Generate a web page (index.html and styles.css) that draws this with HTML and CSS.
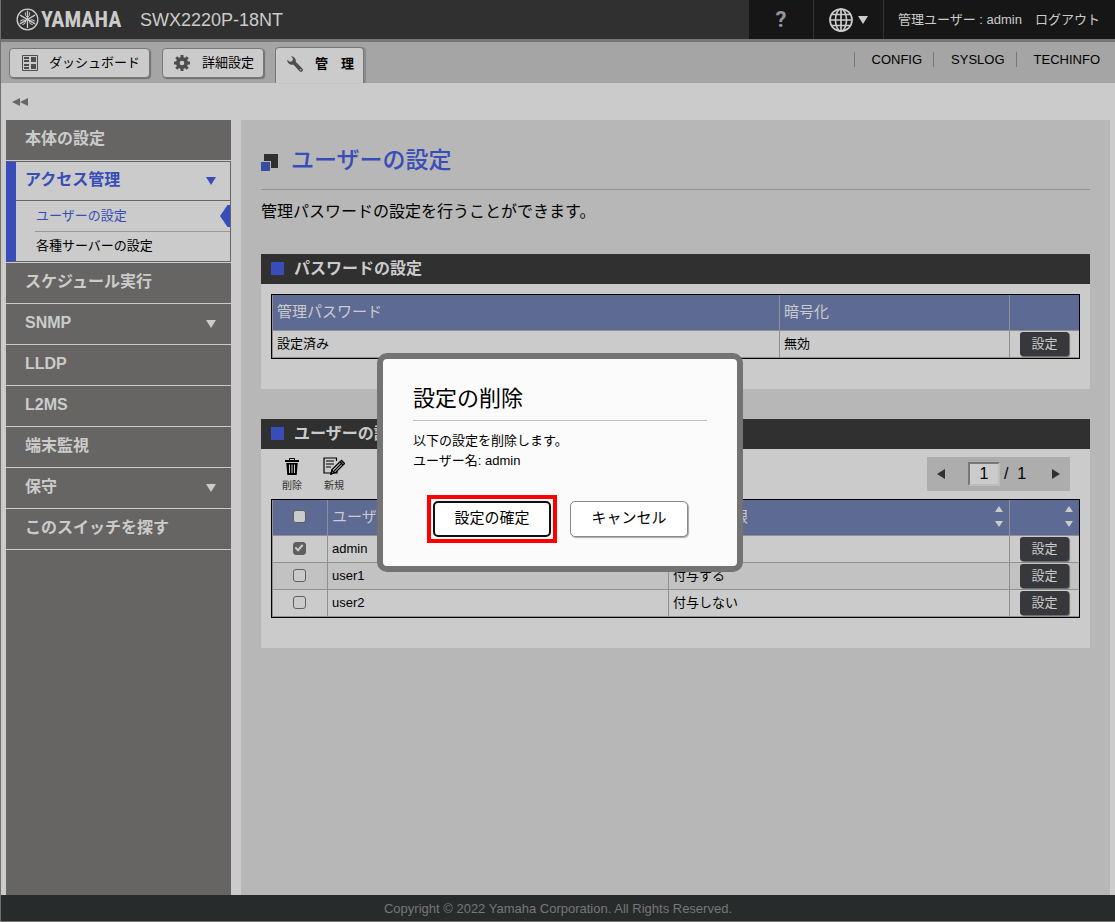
FILE: index.html
```html
<!DOCTYPE html>
<html lang="ja">
<head>
<meta charset="utf-8">
<title>SWX2220P-18NT</title>
<link rel="stylesheet" href="styles.css">
</head>
<body>
<div class="page">
  <header class="top">
    <div class="brand">
      <svg class="brand-mark" viewBox="0 0 24 24" aria-hidden="true">
        <circle cx="12" cy="12" r="10.800" fill="none" stroke="currentColor" stroke-width="1.400"/>
        <g id="fork">
          <path d="M12 2.800V21" fill="none" stroke="currentColor" stroke-width="1.400"/>
          <path d="M9.800 4.500V7.500L12 10L14.200 7.500V4.500" fill="none" stroke="currentColor" stroke-width="1"/>
        </g>
        <use href="#fork" transform="rotate(120 12 12)"/>
        <use href="#fork" transform="rotate(240 12 12)"/>
      </svg>
      <span class="brand-name">YAMAHA</span>
    </div>
    <h1 class="model">SWX2220P-18NT</h1>
    <div class="top-right">
      <button class="help" aria-label="ヘルプ">?</button>
      <button class="lang" aria-label="言語">
        <svg class="globe" viewBox="0 0 24 24" aria-hidden="true">
          <g fill="none" stroke="currentColor" stroke-width="1.700">
            <circle cx="12" cy="12" r="11"/><ellipse cx="12" cy="12" rx="5.500" ry="11"/>
            <path d="M12 1V23M1 12H23M3 6.500H21M3 17.500H21"/>
          </g>
        </svg>
        <svg class="lang-arrow" viewBox="0 0 10 8" aria-hidden="true"><path d="M0 0H10L5 8Z" fill="currentColor"/></svg>
      </button>
      <div class="user"><span>管理ユーザー : admin</span><a href="#">ログアウト</a></div>
    </div>
  </header>

  <nav class="tabs">
    <button class="tab tab-dashboard">
      <svg class="tab-icon" viewBox="0 0 16 16" aria-hidden="true"><path d="M.5.5H15.500V15.500H.5Z" fill="none" stroke="currentColor"/><path d="M2 2H7V4H2ZM2 5H7V7H2ZM2 9H7V11H2ZM2 12H7V14H2ZM9 2H14V7H9ZM9 9H14V14H9Z" fill="currentColor"/></svg>
      ダッシュボード
    </button>
    <button class="tab tab-detail">
      <svg class="tab-icon" viewBox="0 0 16 16" aria-hidden="true"><circle cx="8" cy="8" r="4.200" fill="none" stroke="currentColor" stroke-width="3.800"/><path d="M8 0V3M8 13V16M0 8H3M13 8H16M2.300 2.300L4.500 4.500M11.500 11.500L13.700 13.700M13.700 2.300L11.500 4.500M4.500 11.500L2.300 13.700" stroke="currentColor" stroke-width="3"/></svg>
      詳細設定
    </button>
    <button class="tab tab-admin">
      <svg class="tab-icon" viewBox="0 0 17 17" aria-hidden="true"><path d="M4 .3A5 5 0 0 1 9.300 6.200L16.300 13.200A2 2 0 0 1 13.300 16.200L6.700 9A5 5 0 0 1 .2 3.900L3.500 6.300L6 4.900L6.200 2.500Z" fill="currentColor"/><circle cx="14.600" cy="14.600" r=".8" fill="#cbcbcb"/></svg>
      管　理
    </button>
    <ul class="tools">
      <li><a href="#">CONFIG</a></li>
      <li><a href="#">SYSLOG</a></li>
      <li><a href="#">TECHINFO</a></li>
    </ul>
  </nav>

  <div class="fold">
    <button class="fold-button" aria-label="メニューを閉じる"><svg viewBox="0 0 16 8" aria-hidden="true"><path d="M8 0V8L0 4ZM16 0V8L8 4Z" fill="currentColor"/></svg></button>
  </div>

  <div class="columns">
    <nav class="side">
      <a class="item" href="#">本体の設定</a>
      <div class="group">
        <a class="group-head" href="#">アクセス管理<svg class="caret" viewBox="0 0 10 8" aria-hidden="true"><path d="M0 0H10L5 8Z" fill="currentColor"/></svg></a>
        <a class="sub current" href="#">ユーザーの設定</a>
        <a class="sub" href="#">各種サーバーの設定</a>
      </div>
      <a class="item" href="#">スケジュール実行</a>
      <a class="item" href="#">SNMP<svg class="caret" viewBox="0 0 10 8" aria-hidden="true"><path d="M0 0H10L5 8Z" fill="currentColor"/></svg></a>
      <a class="item" href="#">LLDP</a>
      <a class="item" href="#">L2MS</a>
      <a class="item" href="#">端末監視</a>
      <a class="item" href="#">保守<svg class="caret" viewBox="0 0 10 8" aria-hidden="true"><path d="M0 0H10L5 8Z" fill="currentColor"/></svg></a>
      <a class="item" href="#">このスイッチを探す</a>
    </nav>

    <main class="main">
      <h2 class="title">
        <svg class="title-mark" viewBox="0 0 17 17" aria-hidden="true"><path d="M3 0H17V14H3Z" fill="#303030"/><path d="M0 7H10V17H0Z" fill="#b7b7b7"/><path d="M0 8H9V17H0Z" fill="#394d9f"/></svg>
        ユーザーの設定
      </h2>
      <p class="lead">管理パスワードの設定を行うことができます。</p>

      <section class="card">
        <h3 class="card-title">パスワードの設定</h3>
        <div class="card-body card-body-first">
          <div class="frame">
            <table class="grid">
              <colgroup><col><col class="col-crypt"><col class="col-action"></colgroup>
              <thead><tr><th>管理パスワード</th><th>暗号化</th><th></th></tr></thead>
              <tbody><tr><td>設定済み</td><td>無効</td><td class="action"><button class="set">設定</button></td></tr></tbody>
            </table>
          </div>
        </div>
      </section>

      <section class="card">
        <h3 class="card-title">ユーザーの設定</h3>
        <div class="card-body">
          <div class="toolbar">
            <button class="tool"><svg viewBox="0 0 14 17" class="trash" aria-hidden="true"><path d="M4.500 2V.5H9.500V2" fill="none" stroke="currentColor"/><path d="M0 2H14V4H0ZM1.300 5H12.700L11.700 17H2.300Z" fill="currentColor"/><path d="M4.500 6.500V15M7 6.500V15M9.500 6.500V15" stroke="#cbcbcb"/></svg>削除</button>
            <button class="tool"><svg viewBox="0 0 22 18" class="memo" aria-hidden="true"><path d="M13.500 4V1H1V16H8M14 13V16H12M3 4H11M3 7H11M3 10H8" fill="none" stroke="currentColor" stroke-width="1.200"/><path d="M8 17L9 12.500L18.500 3.500L21.500 6.500L12.500 15.500Z" fill="#cbcbcb" stroke="currentColor" stroke-width="1.300"/><path d="M11 14L19.500 5.500M8 17L9 13.500L11.500 15.500ZM17 5L20 8" fill="none" stroke="currentColor" stroke-width="1.200"/></svg>新規</button>
            <div class="pager">
              <button class="page-step" aria-label="前へ"><svg viewBox="0 0 8 10" aria-hidden="true"><path d="M8 0V10L0 5Z" fill="currentColor"/></svg></button>
              <input class="page-no" type="text" value="1" aria-label="ページ">
              <span class="page-all">/&nbsp; 1</span>
              <button class="page-step" aria-label="次へ"><svg viewBox="0 0 8 10" aria-hidden="true"><path d="M0 0V10L8 5Z" fill="currentColor"/></svg></button>
            </div>
          </div>
          <div class="frame">
            <table class="grid">
              <colgroup><col class="col-check"><col><col><col class="col-action"></colgroup>
              <thead><tr>
                <th class="check"><input type="checkbox" aria-label="すべて選択"></th>
                <th><div class="sortable">ユーザー名<svg class="sort" viewBox="0 0 8 22" aria-hidden="true"><path d="M4 0L8 6H0ZM0 15H8L4 21Z" fill="currentColor"/></svg></div></th>
                <th><div class="sortable">管理者権限<svg class="sort" viewBox="0 0 8 22" aria-hidden="true"><path d="M4 0L8 6H0ZM0 15H8L4 21Z" fill="currentColor"/></svg></div></th>
                <th><div class="sortable sort-only"><svg class="sort" viewBox="0 0 8 22" aria-hidden="true"><path d="M4 0L8 6H0ZM0 15H8L4 21Z" fill="currentColor"/></svg></div></th>
              </tr></thead>
              <tbody>
                <tr><td class="check"><input type="checkbox" checked aria-label="admin"></td><td>admin</td><td>付与する</td><td class="action"><button class="set">設定</button></td></tr>
                <tr><td class="check"><input type="checkbox" aria-label="user1"></td><td>user1</td><td>付与する</td><td class="action"><button class="set">設定</button></td></tr>
                <tr><td class="check"><input type="checkbox" aria-label="user2"></td><td>user2</td><td>付与しない</td><td class="action"><button class="set">設定</button></td></tr>
              </tbody>
            </table>
          </div>
        </div>
      </section>
    </main>
  </div>

  <footer class="foot">Copyright © 2022 Yamaha Corporation. All Rights Reserved.</footer>
</div>

<div class="overlay">
  <div class="dialog" role="dialog" aria-labelledby="dialog-title">
    <h2 class="dialog-title" id="dialog-title">設定の削除</h2>
    <p class="dialog-text">以下の設定を削除します。<br>ユーザー名: admin</p>
    <div class="dialog-actions">
      <div class="marked"><button class="choice primary">設定の確定</button></div>
      <button class="choice">キャンセル</button>
    </div>
  </div>
</div>
</body>
</html>
```
FILE: styles.css
```css
* { box-sizing: border-box; }

body {
  margin: 0;
  font: 13px/20px "Liberation Sans", "Noto Sans CJK JP", sans-serif;
  color: #000;
  background: #cbcbcb;
}
h1, h2, h3, p, ul { margin: 0; padding: 0; font-weight: normal; }
button, input { font: inherit; color: inherit; margin: 0; }
button { border: 0; padding: 0; background: none; }
a { color: inherit; text-decoration: none; }
svg { display: block; flex: none; }

.page {
  display: flex;
  flex-direction: column;
  min-height: 100vh;
  border-left: 1px solid #707070;
  border-bottom: 1px solid #707070;
}

/* header */
.top {
  display: flex;
  align-items: center;
  height: 42px;
  padding-left: 15px;
  background: #303030;
  color: #cbcbcb;
  border-bottom: 3px solid #777;
}
.brand { display: flex; align-items: center; gap: 2px; width: 124px; }
.brand-mark { width: 23px; height: 23px; }
.brand-name { font: bold 22px/24px "Liberation Sans Narrow", "Roboto Condensed", "Open Sans Condensed", "Liberation Sans", sans-serif; }
.model { font-size: 18px; }
.top-right { display: flex; align-self: stretch; margin-left: auto; background: #161616; }
.help { width: 65px; border-right: 1px solid #333; color: #92959a; font: bold 22px/24px Roboto, sans-serif; }
.lang { display: flex; align-items: center; gap: 5px; width: 70px; padding-left: 15px; border-right: 1px solid #333; }
.globe { width: 24px; height: 24px; }
.lang-arrow { width: 10px; height: 8px; }
.user { display: flex; align-items: center; gap: 13px; padding: 0 15px 0 14px; }

/* tab bar */
.tabs { display: flex; height: 41px; padding: 5px 0 0 8px; background: #a5a5a5; }
.tab {
  display: flex;
  align-items: center;
  height: 30px;
  margin-top: 1px;
  background: #cbcbcb;
  border: 1px solid #777;
  border-radius: 4px;
  box-shadow: 1px 1px 1px #707070;
}
.tab-icon { width: 16px; height: 16px; color: #4d4d4d; }
.tab-dashboard { gap: 11px; padding: 0 9px 0 12px; margin-right: 12px; }
.tab-detail { gap: 12px; padding: 0 9px 0 11px; margin-right: 11px; }
.tab-admin {
  gap: 12px;
  height: 36px;
  margin-top: 0;
  padding: 0 9px 4px 11px;
  font-weight: bold;
  border-bottom: 0;
  border-radius: 4px 4px 0 0;
  box-shadow: 2px 0 1px #8a8a8a;
}
.tools { display: flex; margin-left: auto; padding: 5px 15px 0 0; list-style: none; line-height: 15px; height: 20px; }
.tools li { padding-left: 17px; border-left: 1px solid #777; }
.tools li + li { margin-left: 11px; }

.fold { height: 37px; padding: 15px 11px; }
.fold-button { display: block; color: #666; }
.fold-button svg { width: 16px; height: 8px; }

/* columns */
.columns { display: flex; flex: 1; gap: 10px; padding: 0 5px; }
.side { width: 225px; flex: none; background: #666563; color: #cbcbcb; }
.item, .group-head {
  display: flex;
  align-items: center;
  justify-content: space-between;
  padding: 0 15px 2px 19px;
  font-size: 16px;
  font-weight: bold;
}
.item { height: 41px; border-bottom: 1px solid #cbcbcb; }
.caret { width: 10px; height: 8px; margin-top: 2px; }
.group {
  background: #cbcbcb;
  border: 1px solid #666563;
  border-left: 10px solid #394db8;
}
.group + .item { border-top: 1px solid #cbcbcb; height: 42px; }
.group-head { height: 39px; padding: 0 14px 2px 9px; color: #394db8; border-bottom: 1px solid #666563; }
.sub { display: block; margin-left: 19px; height: 29px; line-height: 28px; padding-left: 1px; color: #000; }
.current {
  display: flex;
  justify-content: space-between;
  align-items: center;
  height: 31px;
  line-height: 20px;
  color: #394db8;
  border-bottom: 1px solid #999;
}
.current::after { content: ""; width: 10px; height: 22px; background: #394db8; clip-path: polygon(75% 0, 100% 0, 100% 100%, 75% 100%, 0 50%); }

.main { flex: 1; padding: 20px; background: #b7b7b7; }
.title {
  display: flex;
  align-items: center;
  gap: 13px;
  height: 50px;
  padding: 0 0 9px;
  font-size: 23px;
  font-weight: 500;
  color: #394db8;
  border-bottom: 1px solid #909090;
}
.title-mark { width: 17px; height: 17px; margin-top: 5px; }
.lead { padding: 12px 0 32px; font-size: 16px; }

/* cards */
.card { background: #cbcbcb; }
.card + .card { margin-top: 30px; }
.card-title {
  display: flex;
  align-items: center;
  gap: 10px;
  height: 30px;
  padding: 0 10px 1px;
  font-size: 16px;
  font-weight: bold;
  color: #cbcbcb;
  background: #303030;
}
.card-title::before { content: ""; width: 13px; height: 13px; background: #394db8; }
.card-body { padding: 0 10px 30px; }
.card-body-first { padding-top: 10px; }

.frame { border: 1px solid #000; }
.grid { width: 100%; table-layout: fixed; border-collapse: separate; border-spacing: 0; }
.col-crypt { width: 230px; }
.col-check { width: 55px; }
.col-action { width: 70px; }
.grid th, .grid td { padding: 0 4px; border-left: 1px solid #909090; border-bottom: 1px solid #909090; text-align: left; }
.grid th { height: 36px; padding-bottom: 2px; font-size: 15px; font-weight: normal; color: #cbcbcb; background: #5d6a94; }
.grid td { height: 27px; }
.grid tbody tr:nth-child(even) { background: #c2c2c2; }
.grid .check { text-align: center; padding: 0 2px 2px 0; }
.grid .action { padding: 0 0 0 10px; }
.grid .action, .grid .check { line-height: 0; }
.set {
  width: 49px;
  height: 24px;
  line-height: 22px;
  color: #cbcbcb;
  background: #37383c;
  border-radius: 3px;
  box-shadow: 1px 1px 1px #666;
}
.sortable { display: flex; align-items: center; justify-content: space-between; padding-right: 2px; }
.sort-only { justify-content: flex-end; }
.sort { width: 8px; height: 22px; }

input[type="checkbox"] {
  appearance: none;
  display: inline-grid;
  place-items: center;
  width: 13px;
  height: 13px;
  background: #cbcbcb;
  border: 1px solid #5f5f5f;
  border-radius: 3px;
}
input[type="checkbox"]:checked { background: #5f5f5f; }
input[type="checkbox"]:checked::after {
  content: "";
  width: 9px;
  height: 8px;
  background: #cbcbcb;
  clip-path: polygon(0 50%, 18% 34%, 38% 60%, 82% 4%, 100% 20%, 40% 96%);
}

.toolbar { display: flex; height: 50px; padding: 8px 10px 0; }
.tool { display: flex; flex-direction: column; align-items: center; gap: 3px; width: 22px; margin-right: 20px; font-size: 10px; line-height: 15px; color: #333; }
.tool svg { color: #000; }
.trash { width: 14px; height: 18px; padding-top: 1px; }
.memo { width: 22px; height: 18px; }
.pager { display: flex; align-items: center; height: 34px; margin-left: auto; padding: 0 10px; background: #adadad; font-size: 16px; }
.page-step { color: #303030; }
.page-step svg { width: 8px; height: 10px; }
.page-no { width: 32px; height: 24px; margin: 0 4px 0 23px; padding: 0; text-align: center; background: #cbcbcb; border: 2px solid; border-color: #777 #bdbdbd #bdbdbd #777; }
.page-all { width: 48px; }

.foot { height: 26px; line-height: 27px; text-align: center; color: #777; background: #272b2c; }

/* dialog */
.overlay { position: fixed; inset: 0; display: flex; align-items: center; justify-content: center; padding: 3px 0 0 5px; }
.dialog { width: 366px; padding: 26px 30px 23px; background: #fbfbfb; border: 6px solid #737373; border-radius: 10px; }
.dialog-title { padding-bottom: 7px; font-size: 22px; line-height: 28px; border-bottom: 1px solid #bfbfbf; }
.dialog-text { padding: 10px 0 24px; }
.dialog-actions { display: flex; align-items: center; gap: 13px; padding-left: 14px; }
.marked { padding: 2px; border: 4px solid #f00; }
.choice {
  width: 118px;
  height: 36px;
  padding-bottom: 3px;
  font-size: 15px;
  background: #fff;
  border: 1px solid #888;
  border-radius: 5px;
  box-shadow: 1px 1px 1px #aaa;
}
.primary { display: block; border: 2px solid #101010; box-shadow: none; }
```
